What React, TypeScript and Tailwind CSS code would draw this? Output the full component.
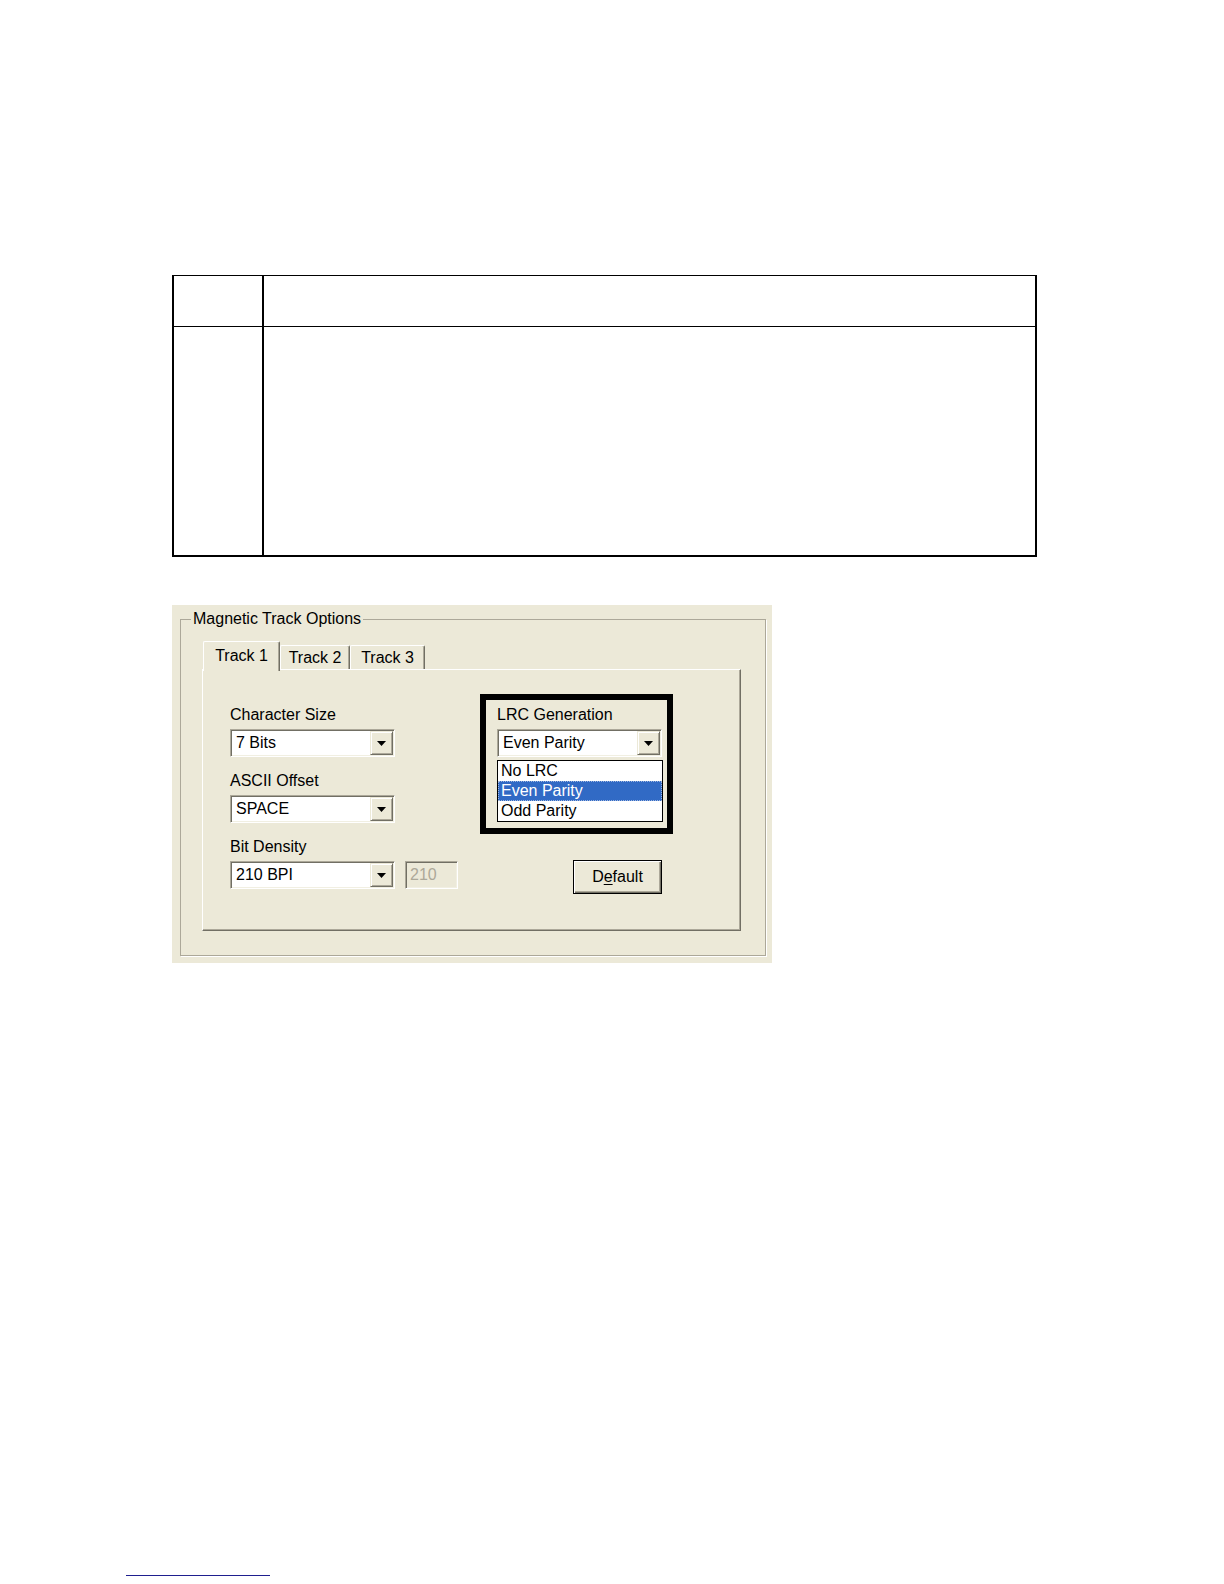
import React from "react";

const FONT = "font-['Liberation_Sans',Arial,sans-serif]";

function Arrow() {
  return (
    <svg width="9" height="5" viewBox="0 0 9 5">
      <path d="M0 0h9L4.5 5z" fill="#000" />
    </svg>
  );
}

function Combo({ value }: { value: string }) {
  return (
    <div className="flex h-[28px] w-[165px] border border-t-[#aca899] border-l-[#aca899] border-r-white border-b-white bg-white p-[1px] shadow-[inset_1px_1px_0_#716f64,inset_-1px_-1px_0_#f1efe2]">
      <span className="flex-1 pl-[4px] leading-[24px]">{value}</span>
      <span className="flex h-[24px] w-[23px] items-center justify-center border border-t-[#ece9d8] border-l-[#ece9d8] border-r-[#716f64] border-b-[#716f64] bg-[#ece9d8] shadow-[inset_1px_1px_0_#fff,inset_-1px_-1px_0_#aca899]">
        <Arrow />
      </span>
    </div>
  );
}

function Label({ children }: { children: React.ReactNode }) {
  return <div className="mb-1 h-[20px] leading-[20px]">{children}</div>;
}

function Tab({ label, active, width }: { label: string; active?: boolean; width: string }) {
  if (active) {
    return (
      <div
        className={`relative z-10 -mb-[2px] flex h-[30px] ${width} items-start justify-center rounded-t-[2px] border-l border-t border-r border-l-white border-t-white border-r-[#716f64] bg-[#ece9d8] pt-[4px] leading-[20px] shadow-[inset_-1px_0_0_#aca899]`}
      >
        {label}
      </div>
    );
  }
  return (
    <div
      className={`flex h-[24px] ${width} items-start justify-center rounded-t-[2px] border-l border-t border-r border-l-white border-t-white border-r-[#716f64] bg-[#ece9d8] pt-[2px] leading-[20px] shadow-[inset_-1px_0_0_#aca899]`}
    >
      {label}
    </div>
  );
}

export default function App() {
  return (
    <div className="min-h-[1584px] w-full bg-white pt-[275px]">
      {/* empty table */}
      <div className="ml-[172px] w-[865px] border-t border-l-2 border-r-2 border-b-2 border-black">
        <div className="flex h-[51px] border-b border-black">
          <div className="w-[90px] border-r-2 border-black" />
          <div className="flex-1" />
        </div>
        <div className="flex h-[228px]">
          <div className="w-[90px] border-r-2 border-black" />
          <div className="flex-1" />
        </div>
      </div>

      {/* dialog */}
      <div className={`ml-[172px] mt-[48px] h-[358px] w-[600px] bg-[#ece9d8] pl-[8px] pt-[4px] text-[16px] text-black ${FONT}`}>
        <fieldset className="h-[347px] w-[586px] border border-[#aca899] shadow-[1px_1px_0_#fff]">
          <legend className="ml-[10px] px-[2px] leading-[20px]">Magnetic Track Options</legend>

          <div className="ml-[22px] mt-[12px] flex items-end">
            <Tab label="Track 1" active width="w-[77px]" />
            <Tab label="Track 2" width="w-[70px]" />
            <Tab label="Track 3" width="w-[75px]" />
          </div>

          <div className="ml-[21px] flex h-[262px] w-[539px] border-t border-l border-r border-b border-t-white border-l-white border-r-[#716f64] border-b-[#716f64] bg-[#ece9d8] pl-[27px] shadow-[inset_-1px_-1px_0_#aca899]">
            <div className="w-[250px] pt-[35px]">
              <Label>Character Size</Label>
              <Combo value="7 Bits" />
              <div className="mt-[14px]">
                <Label>ASCII Offset</Label>
                <Combo value="SPACE" />
              </div>
              <div className="mt-[14px]">
                <Label>Bit Density</Label>
                <div className="flex gap-[10px]">
                  <Combo value="210 BPI" />
                  <div className="h-[28px] w-[53px] border border-t-[#aca899] border-l-[#aca899] border-r-white border-b-white bg-[#ece9d8] pl-[4px] leading-[26px] text-[#aca899] shadow-[inset_1px_1px_0_#716f64,inset_-1px_-1px_0_#f1efe2]">
                    210
                  </div>
                </div>
              </div>
            </div>

            <div className="pt-[24px]">
              <div className="h-[140px] w-[193px] border-[6px] border-black pl-[11px] pt-[5px]">
                <Label>LRC Generation</Label>
                <div className="relative w-[165px]">
                  <Combo value="Even Parity" />
                  <div className="absolute left-0 top-[31px] z-20 w-[166px] border border-black bg-white">
                    <div className="h-[20px] pl-[3px] leading-[20px]">No LRC</div>
                    <div className="h-[20px] bg-[#316ac5] pl-[3px] leading-[20px] text-white outline-1 -outline-offset-1 outline-dotted outline-[#9fb6e0]">
                      Even Parity
                    </div>
                    <div className="h-[20px] pl-[3px] leading-[20px]">Odd Parity</div>
                  </div>
                </div>
              </div>
              <div className="ml-[93px] mt-[26px] flex h-[34px] w-[89px] items-center justify-center border border-black bg-[#ece9d8] shadow-[inset_1px_1px_0_#fff,inset_-1px_-1px_0_#716f64,inset_-2px_-2px_0_#aca899]">
                <span>
                  D<span className="underline underline-offset-2">e</span>fault
                </span>
              </div>
            </div>
          </div>
        </fieldset>
      </div>

      <div className="ml-[126px] mt-[612px] h-px w-[144px] bg-[#1f1f8f]" />
    </div>
  );
}
